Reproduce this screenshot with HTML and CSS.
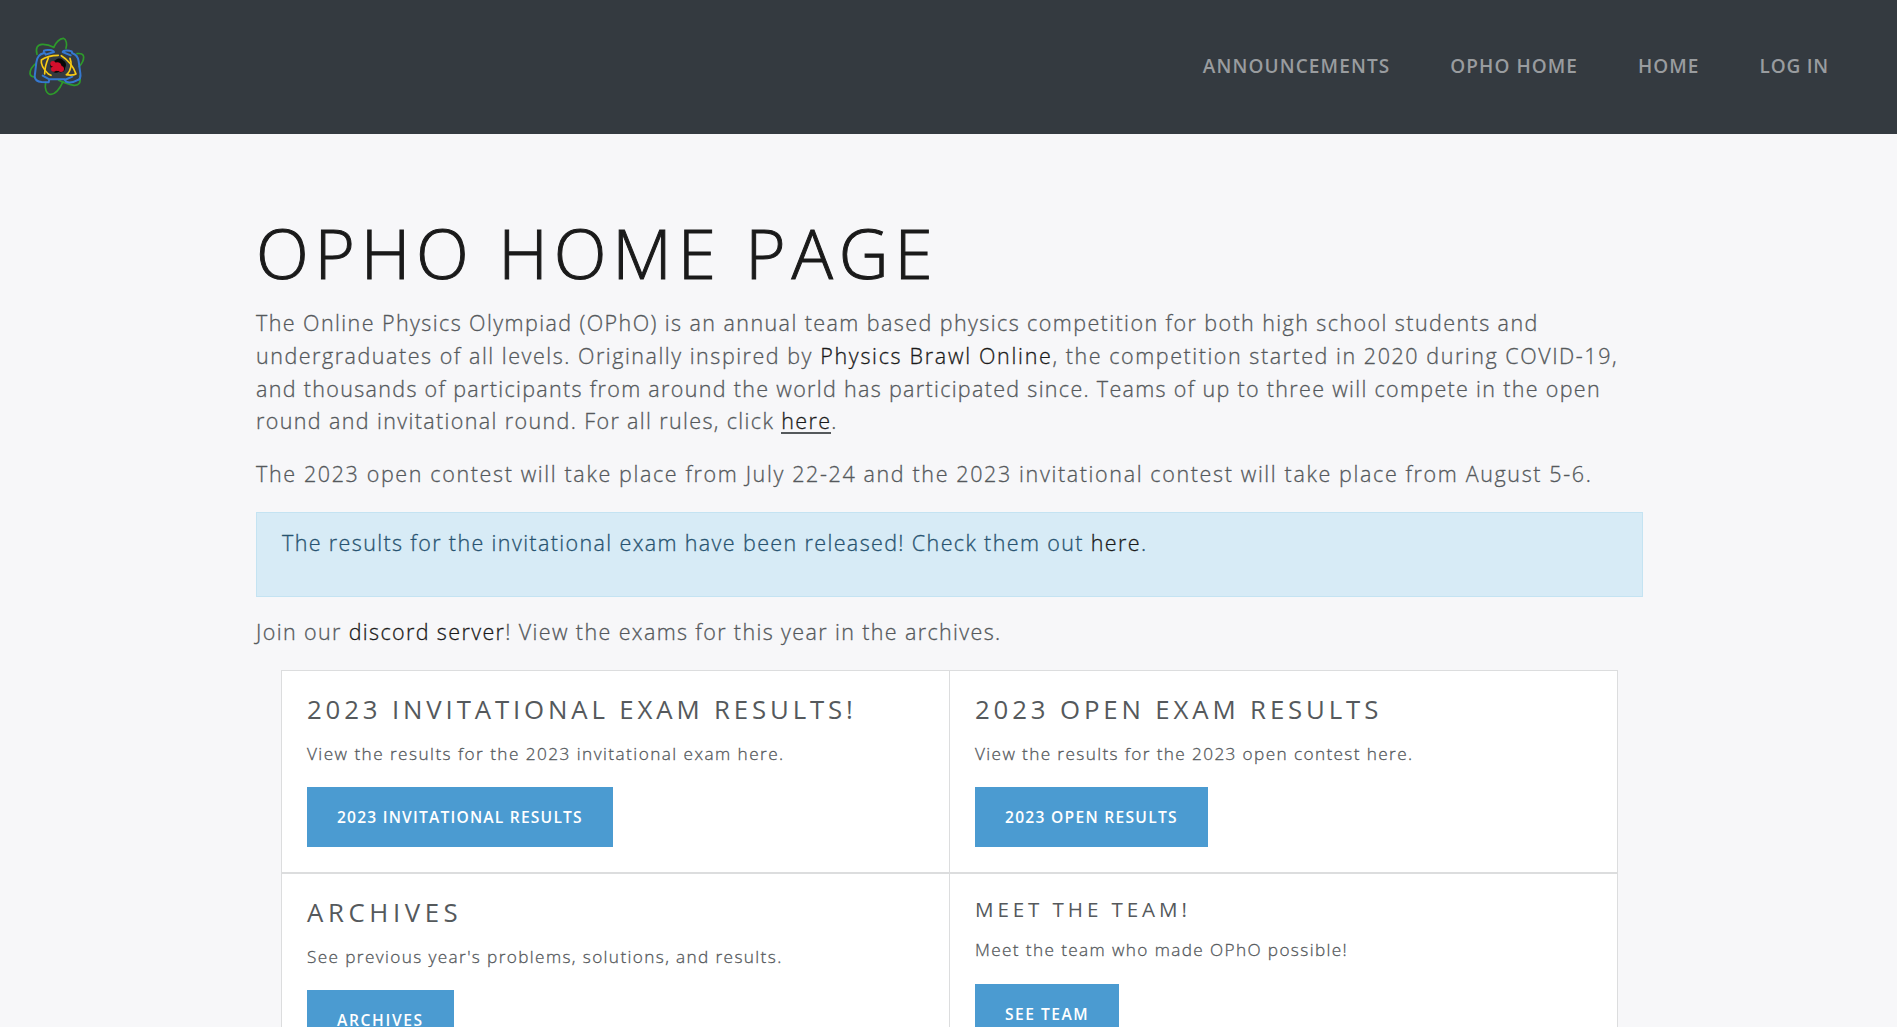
FILE: index.html
```html
<!DOCTYPE html>
<html lang="en">
<head>
<meta charset="utf-8">
<title>OPhO Home Page</title>
<link rel="stylesheet" href="styles.css">
</head>
<body>
<nav class="navbar">
  <a class="brand" href="#" aria-label="OPhO">
    <svg class="logo" viewBox="0 0 225 225" fill="none" stroke-linecap="round" stroke-linejoin="round">
      <g stroke="#2e9a2b" stroke-width="5">
        <path d="M51 73C46 55 52 44 66 43C80 42 92 47 101 52"/>
        <path d="M101 52C108 37 120 26 130 25C139 28 142 42 138 55"/>
        <path d="M171 71C182 69 191 73 191 81C191 92 185 102 177 110"/>
        <path d="M179 138C184 158 177 167 162 166C147 164 133 159 116 151"/>
        <path d="M129 155C120 175 108 192 93 193C79 193 73 176 77 157"/>
        <path d="M47 101C37 109 30 121 30 131C31 140 38 141 46 142"/>
      </g>
      <g stroke="#f7ca14" stroke-width="5">
        <path d="M115 76C96 76 76 81 64 90C62 102 72 119 85 132L93 136"/>
        <path d="M85 84C79 98 74 114 74 132"/>
        <path d="M124 77C143 88 161 111 168 132C160 136 149 136 139 134"/>
        <path d="M150 85C157 101 153 121 141 134"/>
      </g>
      <path stroke="#3578d0" stroke-width="6" d="M102 66L77 74L75 70M102 66C100 60 80 58 72 62L71 70C60 72 51 82 49 97L44 140C45 150 52 155 65 156L86 157L88 148L68 137M88 148H134M128 66C130 59 148 61 155 64L157 70C168 73 174 81 176 94L181 130C183 141 179 149 171 151C160 157 148 160 138 155L134 150L157 140M128 66L152 76"/>
      <path fill="#080808" d="M106 91C111 83 126 84 129 91C139 95 140 108 135 114C136 124 125 130 116 126C106 132 94 124 95 116C86 109 91 96 106 91Z"/>
      <g fill="#d30f2c">
        <circle cx="99" cy="101" r="8"/><circle cx="101" cy="117" r="8"/><circle cx="123" cy="117" r="9"/><circle cx="112" cy="110" r="13"/>
      </g>
    </svg>
  </a>
  <div class="nav-links">
    <a class="nav-link" href="#">Announcements</a>
    <a class="nav-link home" href="#">OPhO Home</a>
    <a class="nav-link home" href="#">Home</a>
    <a class="nav-link login" href="#">Log in</a>
  </div>
</nav>
<main class="container">
  <h1 class="title">OPhO Home Page</h1>
  <p class="lead">
    <span class="line l1">The Online Physics Olympiad (OPhO) is an annual team based physics competition for both high school students and</span>
    <span class="line l2"><span class="l2-start">undergraduates of all levels. Originally inspired by </span><a class="brawl" href="#">Physics Brawl Online</a>, the competition started in 2020 during COVID-19,</span>
    <span class="line l3">and thousands of participants from around the world has participated since. Teams of up to three will compete in the open</span>
    <span class="line l4">round and invitational round. For all rules, click <a class="rules" href="#">here</a>.</span>
  </p>
  <p class="lead dates">The 2023 open contest will take place from July 22-24 and the 2023 invitational contest will take place from August 5-6.</p>
  <div class="alert">
    <p class="lead notice">The results for the invitational exam have been released! Check them out <a href="#">here</a>.</p>
  </div>
  <p class="lead join">Join our <a href="#">discord server</a>! View the exams for this year in the archives.</p>
  <div class="grid">
    <section class="cell">
      <h3 class="cell-title">2023 Invitational Exam Results!</h3>
      <p class="cell-text">View the results for the 2023 invitational exam here.</p>
      <a class="btn" href="#">2023 Invitational Results</a>
    </section>
    <section class="cell">
      <h3 class="cell-title">2023 Open Exam Results</h3>
      <p class="cell-text tight">View the results for the 2023 open contest here.</p>
      <a class="btn open" href="#">2023 Open Results</a>
    </section>
    <section class="cell">
      <h3 class="cell-title archives">Archives</h3>
      <p class="cell-text tight">See previous year's problems, solutions, and results.</p>
      <a class="btn archives-btn" href="#">Archives</a>
    </section>
    <section class="cell">
      <h4 class="cell-title small">Meet the team!</h4>
      <p class="cell-text tight">Meet the team who made OPhO possible!</p>
      <a class="btn team-btn" href="#">See team</a>
    </section>
  </div>
</main>
</body>
</html>
```
FILE: styles.css
```css
* { box-sizing: border-box; }
html, body { height: 100%; }
body {
  margin: 0;
  overflow: hidden;
  background: #f7f7f9;
  color: #55595c;
  font-family: "Open Sans", "Noto Sans", sans-serif;
  font-weight: 300;
}
h1, h3, h4, p { margin: 0; }
a { color: #1a1a1a; text-decoration: none; }

.navbar {
  display: flex;
  justify-content: space-between;
  height: 134px;
  padding: 0 68px 0 20px;
  background: #343a40;
}
.brand { padding-top: 30px; }
.logo { display: block; width: 75px; height: 75px; }
.nav-links { display: flex; gap: 60px; }
.nav-link {
  color: #999c9f;
  font-size: 19px;
  font-weight: 600;
  line-height: 132px;
  letter-spacing: 1.12px;
  text-transform: uppercase;
}
.nav-link.home { letter-spacing: 1.05px; }
.nav-link.login { letter-spacing: 0.8px; }

.container { width: 1387px; margin: 0 0 0 256px; padding-top: 76px; }
.title {
  margin-bottom: 13px;
  color: #1a1a1a;
  font-size: 69px;
  font-weight: 300;
  line-height: 84px;
  letter-spacing: 5.8px;
  text-transform: uppercase;
  white-space: nowrap;
  -webkit-text-stroke: 1px #1a1a1a;
}
.lead {
  font-size: 21.5px;
  font-weight: 300;
  line-height: 32.8px;
  letter-spacing: 1.37px;
  white-space: nowrap;
  -webkit-text-stroke: 0.3px currentColor;
}
.line { display: block; }
.l1 { letter-spacing: 1.42px; }
.l2 { letter-spacing: 1.55px; }
.l2-start { letter-spacing: 1.53px; }
.brawl { letter-spacing: 1.7px; }
.l3 { letter-spacing: 1.32px; }
.rules { display: inline-block; height: 27px; line-height: 27px; border-bottom: 2px solid #55595c; }
.dates { margin-top: 20px; letter-spacing: 1.63px; }
.alert {
  height: 85px;
  margin-top: 21px;
  padding: 14px 25px;
  border: 1px solid #c4e3f2;
  background: #d7ebf6;
}
.notice { color: #275370; }
.join { margin-top: 19px; }

.grid {
  display: grid;
  grid-template-columns: 668px 668px;
  width: 1337px;
  margin: 21px 0 0 25px;
  border-right: 1px solid #dcddde;
}
.cell {
  height: 203px;
  padding: 23px 25px 0;
  border: solid #dcddde;
  border-width: 1px 0 1px 1px;
  background: #fff;
}
.cell-title {
  margin-bottom: 15.5px;
  font-size: 25.8px;
  font-weight: 400;
  line-height: 31.5px;
  letter-spacing: 3.86px;
  text-transform: uppercase;
  white-space: nowrap;
}
.cell-title.archives { letter-spacing: 4.6px; }
.cell-title.small { font-size: 20.6px; line-height: 25.2px; letter-spacing: 3.9px; }
.cell-text {
  margin-bottom: 19.5px;
  font-size: 17.2px;
  font-weight: 300;
  line-height: 26.25px;
  letter-spacing: 1.45px;
  -webkit-text-stroke: 0.3px currentColor;
}
.cell-text.tight { letter-spacing: 1.38px; }
.btn {
  display: inline-block;
  height: 60px;
  padding: 0 30px;
  background: #4b9bd1;
  color: #fff;
  font-size: 15.6px;
  font-weight: 600;
  line-height: 60px;
  letter-spacing: 1.2px;
  text-transform: uppercase;
}
.btn.open { letter-spacing: 1.27px; }
.btn.archives-btn { letter-spacing: 1.65px; }
.btn.team-btn { margin-top: 0.5px; letter-spacing: 1.5px; }
```
